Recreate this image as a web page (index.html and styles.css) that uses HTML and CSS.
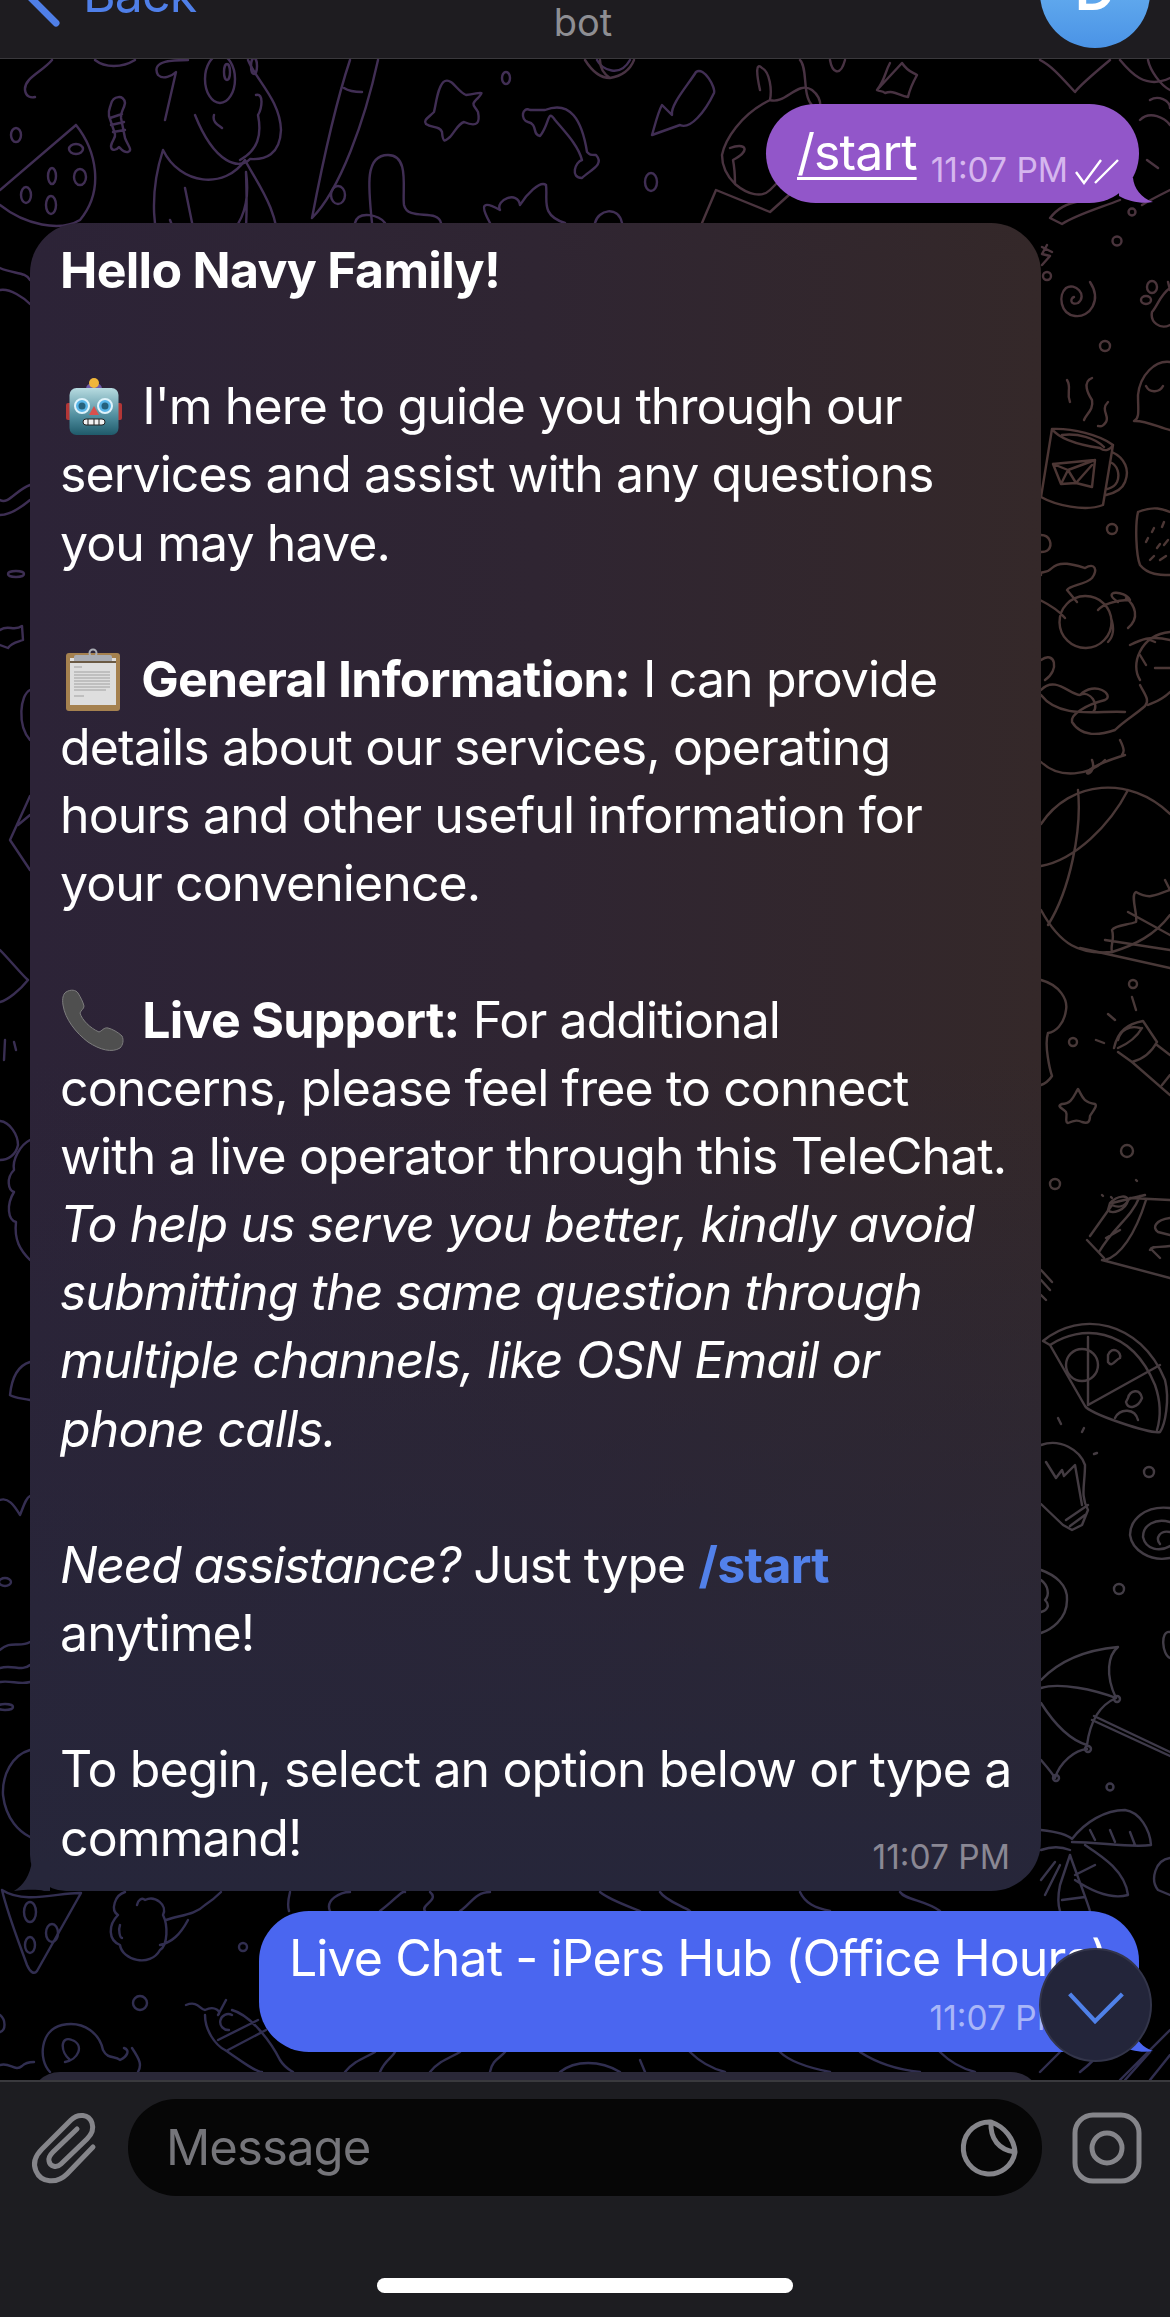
FILE: index.html
```html
<!DOCTYPE html>
<html lang="en">
  <head>
    <meta charset="UTF-8" />
    <title>bot</title>
    <link rel="stylesheet" href="styles.css">
  </head>
  <body>
    <div class="screen">
      <header class="topbar">
        <div class="topbar-side">
          <svg class="back-chevron" viewBox="0 0 40 50" fill="none"><path d="M34 45 L5 16 L34 -13" /></svg>
          <span class="back-text">Back</span>
        </div>
        <div class="title">bot</div>
        <div class="topbar-side topbar-right">
          <div class="avatar">D</div>
        </div>
      </header>

      <main class="chat">
        <svg class="wallpaper" viewBox="0 59 1170 2021" fill="none" stroke-width="2.4" stroke-linecap="round" stroke-linejoin="round">
          <defs>
            <linearGradient id="wallLeft" gradientUnits="userSpaceOnUse" x1="0" y1="60" x2="0" y2="2080">
              <stop offset="0" stop-color="#412e54" />
              <stop offset="1" stop-color="#302e50" />
            </linearGradient>
            <linearGradient id="wallRight" gradientUnits="userSpaceOnUse" x1="0" y1="60" x2="0" y2="2080">
              <stop offset="0" stop-color="#483243" />
              <stop offset="0.2" stop-color="#4c3634" />
              <stop offset="0.55" stop-color="#473939" />
              <stop offset="0.78" stop-color="#423d47" />
              <stop offset="1" stop-color="#302e50" />
            </linearGradient>
          </defs>
          <g stroke="url(#wallLeft)">
            <!-- top band -->
            <path d="M52 60 C42 72 24 78 25 90 C26 97 31 98 35 97" />
            <path d="M95 60 C105 68 122 68 135 60" />
            <ellipse cx="16" cy="135" rx="5" ry="7" />
            <path d="M111 104 C113 96 124 94 125 103 C124 110 120 112 121 118 L125 138 C128 146 133 150 128 152 C124 153 121 149 119 147 C116 151 111 151 111 146 C112 140 116 138 115 134 L109 116 C108 110 110 108 111 104 Z M110 118 L122 114 M111 125 L124 122 M113 132 L125 130" />
            <path d="M76 125 L0 190 M76 125 C96 150 105 190 80 220 C60 232 25 225 0 205" />
            <ellipse cx="76" cy="149" rx="7" ry="5" /><ellipse cx="52" cy="176" rx="4" ry="8" /><ellipse cx="80" cy="177" rx="6" ry="8" /><ellipse cx="26" cy="195" rx="5" ry="8" /><ellipse cx="51" cy="205" rx="5" ry="9" />
            <path d="M188 60 C175 60 150 60 158 75 C163 80 172 76 176 72 L165 120" />
            <ellipse cx="220" cy="79" rx="15" ry="24" /><ellipse cx="227" cy="72" rx="3" ry="8" /><ellipse cx="254" cy="66" rx="3" ry="8" />
            <path d="M248 60 C256 80 280 100 281 130 C280 155 265 160 250 159 C240 170 215 165 195 115 M214 115 C212 122 218 125 222 128 M256 95 C264 93 262 108 258 115 C262 135 258 150 240 160" />
            <path d="M163 150 C180 185 225 190 245 160 C255 180 280 210 278 250 C275 285 250 290 240 270 C245 240 248 230 246 172 M163 150 C150 190 150 240 170 265 C190 283 210 285 240 262 M200 262 L185 188 M246 172 C250 200 245 240 200 247 C185 247 175 235 170 220" />
            <path d="M350 60 C340 90 325 150 312 218 C340 190 365 120 378 60 M344 88 C350 92 356 92 362 92" />
            <ellipse cx="506" cy="78" rx="4" ry="6" />
            <path d="M597 60 C602 70 620 78 630 60" />
            <path d="M445 81 C438 84 436 104 434 112 C428 118 423 120 426 124 C432 128 440 126 442 132 C443 145 446 140 450 137 C456 130 458 124 464 122 C478 128 480 122 478 112 C474 105 470 105 478 98 C485 90 482 93 466 95 C458 92 452 78 445 81 Z" />
            <path d="M530 110 C522 106 520 120 528 122 C538 124 532 135 540 136 C550 124 547 108 555 120 C565 132 578 145 582 160 C575 162 570 178 582 178 C590 170 605 165 596 155 C590 155 590 155 587 152 C582 120 570 100 545 110 Z" />
            <path d="M652 135 C655 125 658 112 662 105 L672 115 C670 105 688 85 696 72 C704 66 716 88 714 93 C705 112 690 130 680 125 Z" />
            <ellipse cx="651" cy="182" rx="6" ry="9" />
            <ellipse cx="338" cy="195" rx="7" ry="9" />
            <path d="M372 223 C368 185 365 155 388 155 C410 155 402 190 404 205 C408 222 438 208 441 223" />
            <path d="M355 223 C358 210 380 215 385 223" />
            <path d="M490 223 C480 205 482 200 500 210 C495 200 518 190 520 205 C526 195 540 180 546 185 C548 200 540 215 565 223" />
            <path d="M595 223 C598 210 618 205 622 223" />
            <!-- left strip -->
            <path d="M0 268 C14 274 26 272 30 280 M0 290 C10 288 24 298 30 304" />
            <path d="M0 500 C8 505 16 490 30 485 M0 515 C12 515 24 505 30 500" />
            <ellipse cx="16" cy="574" rx="8" ry="3" />
            <path d="M0 630 C8 624 14 632 22 626 L23 640 C18 642 12 642 8 648 L0 645" />
            <path d="M30 690 C20 695 17 725 30 740" />
            <path d="M30 796 L10 840 L30 870 M18 825 L30 815" />
            <path d="M0 950 C10 960 22 975 28 980 C20 990 8 1000 0 1002" />
            <path d="M5 1040 L4 1060 M14 1042 L16 1050" />
            <path d="M0 1121 C10 1122 18 1135 18 1145 C16 1155 8 1160 0 1160" />
            <path d="M30 1140 C20 1145 12 1160 14 1170 C6 1178 8 1190 14 1192 C6 1205 8 1220 16 1222 C14 1240 20 1250 30 1260" />
            <path d="M10 1395 C12 1375 20 1365 30 1362 M30 1400 C20 1398 14 1398 10 1395" />
            <path d="M0 1500 C8 1497 14 1505 20 1515 C24 1505 26 1498 30 1496" />
            <ellipse cx="5" cy="1582" rx="6" ry="4" />
            <path d="M0 1650 C10 1640 20 1648 30 1642 M0 1668 C12 1664 22 1672 30 1665 M0 1682 C10 1680 20 1685 30 1682" />
            <ellipse cx="5" cy="1707" rx="8" ry="3" />
            <path d="M30 1750 C12 1755 2 1775 3 1795 C6 1820 20 1832 30 1837" />
            <!-- under the long bubble -->
            <path d="M2 1890 C25 1905 60 1892 81 1893 L37 1971 C34 1975 30 1972 27 1965 C18 1940 8 1915 2 1890" />
            <ellipse cx="30" cy="1912" rx="6" ry="10" /><ellipse cx="52" cy="1933" rx="6" ry="9" /><ellipse cx="30" cy="1945" rx="5" ry="8" />
            <path d="M125 1892 C115 1895 110 1910 118 1915 C108 1925 108 1940 120 1945 C122 1960 150 1968 160 1950 C168 1945 168 1925 163 1915 C168 1905 155 1895 145 1900 C142 1897 138 1900 137 1905 M120 1925 C118 1930 120 1938 122 1938 M166 1920 C180 1915 195 1915 205 1905 C213 1900 218 1895 221 1892 M160 1945 C172 1942 180 1935 188 1920" />
            <circle cx="243" cy="1947" r="4" />
            <circle cx="140" cy="2003" r="7" />
            <path d="M0 2015 C6 2020 6 2030 0 2032" />
            <path d="M50 2072 C38 2060 40 2030 62 2025 C85 2020 100 2035 103 2050 C108 2060 115 2055 120 2060 C128 2056 130 2050 124 2048 M132 2048 C140 2060 142 2065 138 2072 M70 2060 C60 2052 60 2035 72 2040 C85 2045 78 2060 65 2062" />
            <path d="M0 2065 C10 2062 15 2072 22 2066 C26 2062 30 2062 34 2062" />
            <path d="M186 2005 C198 2000 200 2010 205 2010 C215 2005 222 2012 218 2015 L226 2000 M232 2010 C250 2015 270 2040 280 2060 C285 2068 290 2070 293 2072 M205 2015 C205 2030 215 2045 225 2050 C240 2060 255 2072 262 2072 M218 2040 L258 2020 M228 2050 L266 2030 M232 2015 A8 8 0 1 0 229 2030" />
            <path d="M290 1892 C288 1900 288 1908 289 1911 M330 1911 C325 1900 340 1892 350 1892 M380 1911 C395 1900 402 1890 405 1892 M430 1892 C440 1900 420 1905 425 1911 M460 1911 C470 1905 475 1892 490 1892 M600 1892 C610 1900 625 1905 640 1911 M660 1892 C665 1900 680 1905 690 1911 M800 1892 C805 1903 815 1908 830 1911 M900 1892 C905 1900 925 1900 940 1911" />
            <path d="M345 2072 C355 2060 365 2058 375 2052 M380 2072 C385 2060 392 2058 395 2052 M430 2072 C440 2060 450 2058 460 2052 M490 2072 C492 2060 500 2058 505 2052 M560 2072 C575 2060 600 2060 620 2072 M640 2060 L645 2072 M690 2052 C700 2062 710 2068 725 2072 M780 2052 C790 2062 810 2068 830 2072 M860 2052 C880 2065 900 2070 920 2072 M940 2052 C950 2062 960 2068 975 2072" />
          </g>
          <g stroke="url(#wallRight)">
            <!-- top right -->
            <path d="M585 60 C590 68 598 78 610 78 C622 76 630 70 634 60 M600 60 C600 68 604 74 610 78" />
            <path d="M760 90 C756 72 756 62 762 68 C770 72 772 90 770 100 M770 100 C785 105 798 80 812 90 C825 100 822 118 810 125 M770 100 C740 115 725 140 722 155 C722 165 726 175 735 184 M716 190 L702 223 M716 190 L770 212 M730 148 C745 142 752 150 733 160 C735 170 735 178 735 184 C748 195 762 198 770 190 L790 170 M770 212 L800 185" />
            <path d="M800 60 C808 68 802 95 812 105 M830 60 C832 72 840 78 845 60" />
            <path d="M877 90 C885 80 885 72 890 63 M902 63 C908 72 912 72 917 75 C912 84 910 88 908 97 C898 95 894 90 885 93 C882 90 880 92 877 90 Z" />
            <path d="M1040 60 C1052 66 1062 78 1075 92 C1080 85 1098 70 1110 60 M1120 60 C1130 72 1145 90 1170 78 M1140 120 C1150 110 1165 118 1170 125" />
            <path d="M1148 60 C1150 70 1160 85 1170 90 M1150 100 C1158 95 1170 100 1170 108" />
            <path d="M1170 190 C1160 195 1150 200 1142 205 M1147 160 L1158 168" />
            <path d="M1120 200 C1100 208 1078 214 1062 224 L1050 218 C1058 208 1066 204 1080 201" />
            <circle cx="1132" cy="212" r="3.5" /><circle cx="1117" cy="241" r="4.5" /><circle cx="1047" cy="276" r="4" /><circle cx="1105" cy="346" r="5" /><circle cx="1112" cy="529" r="5" />
            <path d="M1090 282 C1102 300 1090 318 1075 316 C1060 314 1058 295 1066 288 C1075 282 1088 295 1078 303 C1070 306 1070 298 1074 297" />
            <path d="M1047 245 L1042 254 L1050 256 L1042 265 M1042 247 L1052 252" />
            <ellipse cx="1152" cy="287" rx="5" ry="6" /><ellipse cx="1146" cy="300" rx="5" ry="4" />
            <path d="M1170 288 C1160 295 1158 305 1152 312 C1150 322 1160 330 1170 325 M1168 282 L1170 290" />
            <path d="M1170 362 C1155 360 1140 375 1138 395 C1138 410 1140 418 1134 421 C1145 420 1160 428 1170 430 M1146 386 C1150 394 1160 392 1163 386" />
            <path d="M1052 429 C1072 428 1100 435 1113 445 C1110 450 1105 452 1100 448 M1052 429 C1060 440 1080 445 1100 448 M1062 435 C1078 433 1095 438 1104 447 M1113 445 L1103 505 C1085 512 1055 505 1041 497 M1052 429 L1041 497 M1112 452 C1125 458 1130 470 1125 482 C1122 490 1115 493 1106 495 M1110 462 C1118 465 1120 475 1117 482 C1114 488 1110 488 1107 489" />
            <path d="M1053 464 L1095 460 L1092 487 L1076 483 L1061 484 Z M1053 464 L1068 470 L1095 460 M1068 470 L1061 484 M1068 470 L1076 483 M1076 483 L1092 465" />
            <path d="M1067 380 C1072 388 1066 392 1070 402 M1092 378 C1082 382 1088 394 1092 400 C1094 410 1086 414 1084 420 M1108 402 C1100 410 1110 416 1106 422 C1102 428 1100 426 1098 426" />
            <path d="M1138 512 C1155 505 1165 510 1170 512 M1138 512 C1135 525 1136 555 1140 565 C1148 575 1160 575 1170 575" />
            <path d="M1154 528 L1152 532 M1164 522 L1162 527 M1146 542 L1148 538 M1157 548 L1160 544 M1168 540 L1164 545 M1150 560 L1154 556 M1166 556 L1160 560" />
            <path d="M1041 535 C1050 535 1053 545 1048 550 C1046 552 1044 552 1041 552" />
            <path d="M1041 575 C1040 570 1045 575 1052 568 C1060 560 1075 565 1085 568 C1095 562 1098 570 1092 578 C1085 585 1070 585 1067 590 L1077 602 M1040 600 C1050 605 1060 612 1065 618 M1098 610 C1102 605 1115 600 1130 600 C1125 590 1100 590 1118 602 M1126 598 C1135 605 1140 618 1128 628 M1085 596 A26 26 0 1 0 1086 648 A26 26 0 1 0 1085 596 M1111 618 C1115 630 1112 638 1108 642" />
            <path d="M1041 660 C1055 650 1060 670 1045 680 M1041 690 C1055 675 1070 695 1080 695 C1090 690 1100 705 1093 712 M1041 695 C1060 720 1100 710 1125 712 M1080 695 C1095 680 1115 695 1105 700 C1085 705 1070 715 1072 722 C1082 738 1100 735 1115 730 C1125 720 1135 715 1145 706 C1150 700 1145 695 1140 685" />
            <path d="M1140 680 C1130 665 1140 635 1170 632 M1130 645 C1140 640 1150 635 1170 640 M1150 640 L1155 642 M1170 668 L1155 668 M1140 655 L1146 665 M1148 705 C1155 702 1162 700 1170 692" />
            <path d="M1092 760 C1100 782 1060 775 1125 755 M1120 740 C1125 750 1124 752 1122 755" />
            <path d="M1041 762 C1060 780 1090 775 1105 760" />
            <!-- globe -->
            <path d="M1041 824 C1070 780 1130 775 1170 814 M1078 790 C1082 830 1070 890 1048 925 M1041 866 C1075 860 1110 825 1128 790 M1041 910 C1060 945 1080 955 1112 952 C1135 945 1155 935 1170 915" />
            <path d="M1170 890 C1155 895 1150 900 1136 892 C1130 895 1138 915 1136 922 C1128 925 1115 925 1112 930 C1115 940 1110 945 1112 952 M1165 880 L1170 890 M1128 912 L1170 935 M1105 940 L1170 950 M1080 948 L1170 968" />
            <!-- flashlight -->
            <path d="M1114 1048 C1118 1030 1128 1024 1143 1021 L1157 1042 C1150 1055 1140 1060 1132 1062 L1118 1052 M1118 1040 C1120 1030 1130 1025 1140 1028 M1118 1048 C1125 1045 1135 1040 1142 1028 M1132 1062 L1170 1095 M1157 1045 L1170 1055 M1162 1085 L1170 1075" />
            <path d="M1132 997 L1136 1010 M1108 1014 L1115 1020 M1096 1040 L1104 1043" />
            <circle cx="1133" cy="984" r="4" /><circle cx="1073" cy="1042" r="4" /><circle cx="1127" cy="1151" r="6" /><circle cx="1055" cy="1184" r="5" />
            <path d="M1078 1089 C1082 1095 1082 1102 1095 1104 C1098 1106 1092 1112 1090 1116 C1090 1122 1088 1124 1082 1122 C1078 1120 1075 1120 1068 1123 C1064 1122 1068 1116 1066 1112 C1062 1108 1056 1106 1062 1104 C1072 1104 1074 1095 1078 1089 Z" />
            <path d="M1041 980 C1060 985 1068 1000 1066 1010 C1064 1025 1055 1032 1048 1033 C1044 1045 1050 1070 1052 1076 C1048 1082 1044 1084 1041 1085" />
            <!-- book -->
            <path d="M1110 1203 C1118 1195 1128 1195 1128 1200 C1126 1210 1112 1215 1108 1210 Z M1102 1195 L1103 1196 M1136 1180 L1137 1181 M1111 1197 L1112 1198" />
            <path d="M1112 1203 L1145 1195 M1090 1236 L1112 1205 C1118 1208 1124 1208 1130 1198 L1170 1200 M1087 1240 L1104 1258 M1105 1260 C1120 1256 1135 1235 1146 1200 M1099 1252 C1115 1225 1130 1220 1140 1196 M1102 1260 L1170 1278 M1106 1238 L1120 1230 M1170 1218 C1155 1220 1152 1228 1158 1232 L1170 1235 M1152 1250 L1160 1258 M1170 1246 C1160 1248 1152 1245 1150 1250" />
            <path d="M1041 1280 L1050 1290 M1041 1270 L1052 1282 M1041 1295 L1046 1300" />
            <!-- pizza -->
            <path d="M1043 1341 C1080 1310 1140 1320 1165 1380 C1170 1400 1165 1425 1160 1432 C1150 1434 1090 1414 1085 1406 L1050 1345 L1043 1341 M1050 1345 C1080 1325 1130 1325 1155 1385 C1162 1405 1160 1420 1157 1430 M1088 1337 L1088 1405 M1088 1405 L1160 1365" />
            <circle cx="1082" cy="1365" r="16" />
            <path d="M1108 1355 C1112 1345 1122 1352 1120 1358 C1115 1360 1112 1368 1108 1362 Z M1128 1398 C1130 1390 1140 1388 1142 1398 C1138 1408 1128 1410 1126 1402 Z M1115 1418 C1120 1408 1135 1408 1138 1420" />
            <path d="M1058 1418 L1061 1424 M1082 1432 L1084 1428 M1094 1454 L1097 1453" />
            <path d="M1041 1445 C1060 1438 1080 1450 1085 1465 C1085 1485 1080 1495 1088 1510 L1082 1525 L1072 1530 L1063 1525 L1041 1504 M1046 1462 L1056 1478 L1062 1470 L1064 1476 L1075 1465 L1082 1505 M1066 1520 L1088 1505 M1070 1526 L1085 1515" />
            <circle cx="1149" cy="1472" r="5" /><circle cx="1119" cy="1589" r="5" /><circle cx="1110" cy="1787" r="3.5" />
            <path d="M1170 1508 C1145 1505 1130 1520 1130 1535 C1132 1550 1150 1562 1170 1558 M1170 1522 C1155 1518 1143 1525 1143 1537 C1146 1550 1160 1552 1170 1546 M1170 1532 C1160 1530 1155 1538 1160 1544" />
            <path d="M1041 1570 C1055 1575 1068 1585 1067 1600 C1067 1620 1050 1630 1041 1633 M1041 1580 C1048 1585 1050 1595 1045 1600 C1050 1605 1048 1610 1041 1612" />
            <path d="M1170 1632 C1160 1630 1162 1655 1170 1658" />
            <!-- umbrella -->
            <path d="M1041 1680 C1060 1660 1085 1650 1118 1647 C1108 1655 1105 1675 1116 1698 C1095 1690 1060 1682 1041 1688 M1116 1698 C1100 1705 1090 1722 1087 1745 C1070 1740 1055 1725 1041 1703 M1087 1749 C1075 1750 1060 1762 1055 1778 C1050 1770 1045 1765 1041 1760" />
            <path d="M1094 1716 L1170 1752 M1092 1720 L1170 1756" />
            <circle cx="1117" cy="1699" r="3" /><circle cx="1088" cy="1749" r="3" /><circle cx="1056" cy="1778" r="3" />
            <!-- palm -->
            <path d="M1041 1830 C1058 1832 1068 1835 1072 1839 C1085 1822 1105 1810 1125 1810 C1140 1812 1150 1830 1151 1845 C1130 1848 1100 1842 1072 1842 M1085 1845 C1100 1855 1125 1870 1128 1895 C1110 1900 1090 1890 1075 1880 M1041 1850 C1055 1845 1065 1848 1070 1850 M1041 1880 L1055 1862 M1070 1855 L1060 1885 C1058 1895 1058 1905 1060 1911 M1070 1855 C1075 1870 1085 1895 1090 1911 M1062 1900 L1085 1897 M1090 1830 L1095 1840 M1110 1830 L1115 1842 M1130 1832 L1135 1845 M1060 1865 L1045 1895 M1075 1875 L1095 1865" />
            <path d="M1170 1858 C1155 1860 1150 1880 1158 1890 L1170 1895" />
            <path d="M1060 2052 L1040 2072 M1100 2052 C1095 2060 1085 2068 1080 2072 M1150 2052 L1125 2080 M1170 2030 C1150 2050 1130 2070 1120 2080 M1170 2055 L1150 2080" />
          </g>
        </svg>

        <div class="bubble-row out">
          <div class="bubble bubble-start">
            <span class="cmd">/start</span>
            <span class="meta">11:07 PM<svg class="checks" viewBox="0 0 44 26" fill="none"><path d="M1 13 L9 24 L26 1 M20 24 L43 1" /></svg></span>
            <svg class="tail tail-out" viewBox="0 0 36 26"><path d="M0 0 H14 C15 10 22 20 34 24 C24 26 10 24 0 18 Z" fill="#9256c9" /></svg>
          </div>
        </div>

        <div class="bubble bubble-in">
          <p class="para"><b>Hello Navy Family!</b></p>
          <p class="para">
            <svg class="emoji emoji-robot" viewBox="0 0 56 57">
              <defs>
                <linearGradient id="robotHead" x1="0" y1="0" x2="0" y2="1">
                  <stop offset="0" stop-color="#b7dbe0" />
                  <stop offset="0.6" stop-color="#4f8d9e" />
                  <stop offset="1" stop-color="#1f5a6a" />
                </linearGradient>
              </defs>
              <rect x="0" y="25" width="6" height="17" rx="2" fill="#b33636" />
              <rect x="50" y="25" width="6" height="17" rx="2" fill="#b33636" />
              <path d="M20 11 Q20 5 28 5 Q36 5 36 11 Z" fill="#6d5aa8" />
              <circle cx="28" cy="5" r="5" fill="#f0b63a" />
              <rect x="3.5" y="10" width="49" height="47" rx="7" fill="url(#robotHead)" />
              <circle cx="16" cy="28" r="7" fill="#58b5e8" stroke="#dff3fb" stroke-width="2" />
              <circle cx="39" cy="28" r="7" fill="#58b5e8" stroke="#dff3fb" stroke-width="2" />
              <circle cx="16" cy="28" r="3.5" fill="#25617d" />
              <circle cx="39" cy="28" r="3.5" fill="#25617d" />
              <path d="M28 28 L23 37 H33 Z" fill="#d8504d" />
              <rect x="17" y="41" width="22" height="6" rx="3" fill="#f2f2f2" stroke="#222" stroke-width="1" />
              <path d="M22 41 V47 M28 41 V47 M33 41 V47" stroke="#222" stroke-width="1" />
            </svg> I'm here to guide you through our<br>
            services and assist with any questions<br>
            you may have.
          </p>
          <p class="para">
            <svg class="emoji emoji-clip" viewBox="0 0 54 62">
              <rect x="0" y="4" width="54" height="58" rx="3" fill="#a5814f" />
              <rect x="4" y="9" width="46" height="47" fill="#dedede" />
              <rect x="8" y="6" width="38" height="8" rx="2" fill="#a9acb3" />
              <circle cx="27" cy="4" r="3.5" fill="none" stroke="#a9acb3" stroke-width="2" />
              <rect x="4" y="12" width="46" height="2" fill="#6b5a44" />
              <path d="M8 18 H16 M8 23 H44 M8 26 H44 M8 29 H44 M8 32 H44 M8 35 H44 M8 38 H44 M8 41 H40 M8 47 H18" stroke="#a0a0a0" stroke-width="1.2" />
            </svg> <b>General Information:</b> I can provide<br>
            details about our services, operating<br>
            hours and other useful information for<br>
            your convenience.
          </p>
          <p class="para">
            <svg class="emoji emoji-phone" viewBox="0 0 62 62">
              <path d="M4 2 C9 -1 14 0 16 3 C19 8 21 12 22 16 C22 19 19 20 18 23 C20 30 28 38 37 42 C40 41 42 37 46 38 C50 39 56 42 60 46 C62 50 61 55 58 58 C50 63 38 60 26 52 C14 43 3 29 1 15 C0 9 1 4 4 2 Z" fill="#4f4f4f" stroke="#7d7d7d" stroke-width="1" />
            </svg> <b>Live Support:</b> For additional<br>
            concerns, please feel free to connect<br>
            with a live operator through this TeleChat.<br>
            <i>To help us serve you better, kindly avoid<br>
            submitting the same question through<br>
            multiple channels, like OSN Email or<br>
            phone calls.</i>
          </p>
          <p class="para"><i class="ask">Need assistance?</i> Just type <b class="link">/start</b><br>anytime!</p>
          <div class="last-row">
            <p class="para-last">To begin, select an option below or type a<br>command!</p>
            <span class="meta meta-in">11:07 PM</span>
          </div>
          <svg class="tail tail-in" viewBox="0 0 36 30"><path d="M36 0 V30 H30 C22 28 10 29 0 30 C10 24 16 14 18 0 Z" fill="#26263a" /></svg>
        </div>

        <div class="bubble-row out">
          <div class="bubble bubble-live">
            <div class="live-text">Live Chat - iPers Hub (Office Hours)</div>
            <span class="meta meta-live">11:07 PM<svg class="checks" viewBox="0 0 44 26" fill="none"><path d="M1 13 L9 24 L26 1 M20 24 L43 1" /></svg></span>
            <svg class="tail tail-out" viewBox="0 0 36 26"><path d="M0 0 H14 C15 10 22 20 34 24 C24 26 10 24 0 18 Z" fill="#4a66f0" /></svg>
          </div>
        </div>

        <div class="bubble bubble-next"></div>

        <button class="scroll-down">
          <svg viewBox="0 0 60 34" fill="none"><path d="M2 2 L29 31 L58 2" /></svg>
        </button>
      </main>

      <footer class="composer">
        <div class="composer-row">
          <svg class="icon-attach" viewBox="0 0 62 72" fill="none"><path d="M60 35 L34 62 C24 72 8 71 3 59 C-1 50 3 43 9 37 L38 8 C45 1 56 2 59 11 C61 17 59 22 54 27 L28 52 C24 56 17 55 16 49 C15 45 18 42 20 40 L44 17" /></svg>
          <div class="input">
            <span class="placeholder">Message</span>
            <svg class="icon-sticker" viewBox="0 0 57 57" fill="none"><path d="M30 3 A26 26 0 1 0 54 33 C53 20 44 8 30 3 Z M30 3 C29 20 38 31 54 33" /></svg>
          </div>
          <svg class="icon-video" viewBox="0 0 70 72" fill="none"><rect x="3" y="3" width="64" height="66" rx="18" /><circle cx="35" cy="36" r="15" /></svg>
        </div>
        <div class="home-bar"></div>
      </footer>
    </div>
  </body>
</html>
```

FILE: styles.css
```css
* {
  box-sizing: border-box;
}
body {
  margin: 0;
  background: #000;
  font-family: Inter, "Liberation Sans", sans-serif;
  color: #fff;
}
p {
  margin: 0;
}
.screen {
  width: 1170px;
  height: 2317px;
  display: flex;
  flex-direction: column;
  overflow: hidden;
}

/* top bar, cut off by the top of the shot */
.topbar {
  height: 59px;
  flex: none;
  display: flex;
  align-items: flex-end;
  background: #1e1c20;
  border-bottom: 1px solid #3a383c;
}
.topbar-side {
  flex: 1;
  display: flex;
  align-items: flex-end;
  height: 100px;
  color: #4f7fe8;
}
.topbar-right {
  justify-content: flex-end;
  padding-right: 20px;
  padding-bottom: 10px;
}
.back-chevron {
  width: 40px;
  height: 50px;
  margin-left: 22px;
  margin-bottom: 30px;
  overflow: visible;
}
.back-chevron path {
  stroke: #4f7fe8;
  stroke-width: 7;
  stroke-linecap: round;
  stroke-linejoin: round;
}
.back-text {
  font-size: 50px;
  line-height: 60px;
  margin-left: 21px;
  margin-bottom: 34px;
  letter-spacing: -0.9px;
}
.title {
  font-size: 38px;
  line-height: 44px;
  color: #8e8e93;
  padding-bottom: 14px;
  margin-left: 16px;
}
.avatar {
  width: 110px;
  height: 110px;
  flex: none;
  border-radius: 50%;
  background: linear-gradient(#78c0f5, #4a93e6);
  font-size: 56px;
  font-weight: 600;
  line-height: 104px;
  text-align: center;
  color: #fff;
}

/* chat */
.chat {
  position: relative;
  height: 2021px;
  flex: none;
  overflow: hidden;
  padding: 45px 31px 0 30px;
  display: flex;
  flex-direction: column;
  gap: 20px;
  background: #000;
}
.wallpaper {
  position: absolute;
  left: 0;
  top: 0;
  width: 1170px;
  height: 2021px;
}
.bubble-row {
  position: relative;
  display: flex;
  justify-content: flex-end;
}
.bubble {
  position: relative;
  border-radius: 50px;
  flex: none;
}
.tail {
  position: absolute;
}
.tail-out {
  width: 36px;
  height: 26px;
  right: -16px;
  bottom: -1px;
}
.tail-in {
  width: 36px;
  height: 30px;
  left: -16px;
  bottom: 0;
}
.meta {
  font-size: 33.5px;
  line-height: 40px;
  letter-spacing: 0;
  white-space: nowrap;
}
.checks {
  width: 44px;
  height: 26px;
  margin-left: 7px;
  vertical-align: -3px;
}
.checks path {
  stroke: #fff;
  stroke-width: 2.4;
}

.bubble-start {
  width: 373px;
  height: 99px;
  background: #9256c9;
  display: flex;
  padding: 18px 21px 0 31px;
}
.cmd {
  font-size: 50px;
  line-height: 60px;
  height: 58px;
  text-decoration: underline;
  text-decoration-thickness: 3px;
  text-underline-offset: 7px;
  letter-spacing: -0.9px;
  margin-right: 14px;
}
.bubble-start .meta {
  color: #d6b6ee;
  padding-top: 28px;
}

.bubble-in {
  position: relative;
  width: 1011px;
  height: 1668px;
  padding: 13px 30px 0 30px;
  font-size: 50px;
  line-height: 68.15px;
  letter-spacing: -0.9px;
  white-space: nowrap;
  border-bottom-left-radius: 36px;
  background:
    linear-gradient(to bottom, rgba(37, 37, 58, 0) 50%, #26263a 100%),
    linear-gradient(to right, #2c2337 0%, #2f2532 50%, #342829 100%);
}
.bubble-in b {
  letter-spacing: -0.7px;
}
.para {
  margin-bottom: 68.15px;
}
.para i.ask {
  letter-spacing: -1.3px;
}
.emoji {
  display: inline-block;
  vertical-align: -11px;
  overflow: visible;
}
.emoji-robot {
  width: 56px;
  height: 57px;
  margin: 0 7px 0 6px;
}
.emoji-clip {
  width: 54px;
  height: 62px;
  margin: 0 8px 0 6px;
  vertical-align: -14px;
}
.emoji-phone {
  width: 62px;
  height: 62px;
  margin: 0 5px 0 2px;
  vertical-align: -14px;
}
.link {
  color: #5281ea;
}
.last-row {
  display: flex;
  justify-content: space-between;
  align-items: flex-end;
}
.meta-in {
  color: #8a8894;
  margin-bottom: -5px;
  margin-left: -300px;
  margin-right: 1px;
}

.bubble-live {
  width: 880px;
  height: 141px;
  background: #4a66f0;
  padding: 17px 21px 0 30px;
  display: flex;
  flex-direction: column;
}
.live-text {
  font-size: 50px;
  line-height: 60px;
  letter-spacing: -0.9px;
  white-space: nowrap;
}
.meta-live {
  color: #a9b6f8;
  align-self: flex-end;
  margin-top: 10px;
}

.bubble-next {
  width: 1011px;
  height: 60px;
  background: #2a2838;
}

.scroll-down {
  position: absolute;
  left: 1039px;
  top: 1889px;
  width: 113px;
  height: 114px;
  border-radius: 50%;
  background: #23253a;
  border: 2px solid #33354a;
  padding: 0;
  display: flex;
  align-items: center;
  justify-content: center;
}
.scroll-down svg {
  width: 58px;
  height: 32px;
  margin-top: 6px;
}
.scroll-down path {
  stroke: #4f81e8;
  stroke-width: 4.5;
}

/* bottom bar */
.composer {
  flex: 1;
  background: #1d1d21;
  border-top: 2px solid #3a3a3e;
  position: relative;
  display: flex;
  flex-direction: column;
  align-items: center;
}
.composer-row {
  width: 100%;
  display: flex;
  align-items: center;
  padding: 17px 28px 0 33px;
}
.icon-attach {
  width: 62px;
  height: 72px;
  flex: none;
  margin-right: 33px;
  overflow: visible;
}
.icon-attach path,
.icon-sticker path,
.icon-video rect,
.icon-video circle {
  stroke: #85858a;
  stroke-width: 5;
  stroke-linecap: round;
  stroke-linejoin: round;
}
.input {
  flex: 1;
  height: 97px;
  border-radius: 48px;
  background: #060606;
  display: flex;
  align-items: center;
  justify-content: space-between;
  padding: 0 24px 0 38px;
}
.placeholder {
  font-size: 49px;
  letter-spacing: -0.9px;
  color: #75757a;
}
.icon-sticker {
  width: 57px;
  height: 57px;
  overflow: visible;
}
.icon-video {
  width: 70px;
  height: 72px;
  flex: none;
  margin-left: 30px;
}
.home-bar {
  width: 416px;
  height: 15px;
  margin-top: 82px;
  border-radius: 8px;
  background: #fff;
}
```
